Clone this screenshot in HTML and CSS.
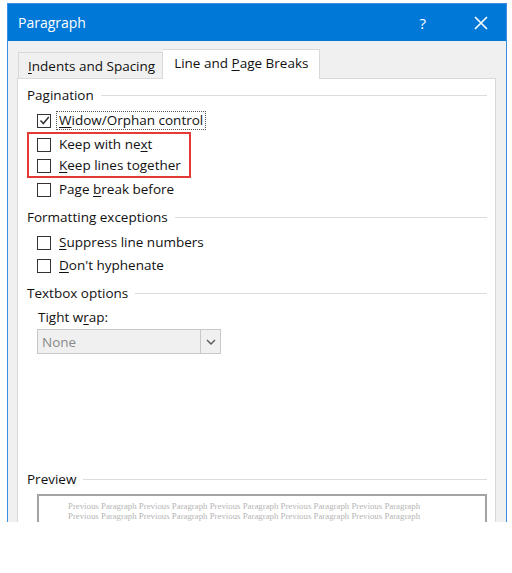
FILE: index.html
```html
<!DOCTYPE html>
<html lang="en">
<head>
  <meta charset="UTF-8">
  <title>Paragraph</title>
  <link rel="stylesheet" href="styles.css">
</head>
<body>
  <div class="dialog">
    <div class="titlebar">
      <span class="title">Paragraph</span>
      <span class="help">?</span>
      <svg class="close" width="14" height="14" viewBox="0 0 14 14">
        <path d="M1 1 L13 13 M13 1 L1 13" stroke="#fff" stroke-width="1.6" fill="none"/>
      </svg>
    </div>

    <div class="frame">
      <div class="tabs">
        <div class="tab"><span><u>I</u>ndents and Spacing</span></div>
        <div class="tab active"><span>Line and <u>P</u>age Breaks</span></div>
      </div>

      <div class="panel">
        <div class="group-title"><span>Pagination</span></div>
        <div class="options">
          <div class="row"><span class="box checked"><svg width="11" height="11" viewBox="0 0 11 11"><path d="M1.5 5.5 L4.3 8.5 L9.8 2" stroke="#333" stroke-width="1.5" fill="none"/></svg></span><span class="label focus"><u>W</u>idow/Orphan control</span></div>
          <div class="highlight">
            <div class="row"><span class="box"></span><span class="label">Keep with ne<u>x</u>t</span></div>
            <div class="row"><span class="box"></span><span class="label"><u>K</u>eep lines together</span></div>
          </div>
          <div class="row"><span class="box"></span><span class="label">Page <u>b</u>reak before</span></div>
        </div>

        <div class="group-title"><span>Formatting exceptions</span></div>
        <div class="options">
          <div class="row"><span class="box"></span><span class="label"><u>S</u>uppress line numbers</span></div>
          <div class="row"><span class="box"></span><span class="label"><u>D</u>on't hyphenate</span></div>
        </div>

        <div class="group-title"><span>Textbox options</span></div>
        <div class="options">
          <div class="field-label">Tight w<u>r</u>ap:</div>
          <div class="select">
            <span class="value">None</span>
            <span class="arrow"><svg width="10" height="6" viewBox="0 0 10 6"><path d="M1 1 L5 5 L9 1" stroke="#555" stroke-width="1.3" fill="none"/></svg></span>
          </div>
        </div>

        <div class="spacer"></div>

        <div class="group-title"><span>Preview</span></div>
        <div class="preview">
          <p>Previous Paragraph Previous Paragraph Previous Paragraph Previous Paragraph Previous Paragraph</p>
          <p>Previous Paragraph Previous Paragraph Previous Paragraph Previous Paragraph Previous Paragraph</p>
        </div>
      </div>
    </div>
  </div>
</body>
</html>
```

FILE: styles.css
```css
* { box-sizing: border-box; }
body {
  margin: 0;
  background-color: #fff;
  font-family: 'Open Sans', 'Noto Sans', sans-serif;
  font-size: 13px;
  color: #111;
}
u { text-decoration-thickness: 1px; text-underline-offset: 2px; }

.dialog {
  margin: 3px 0 0 7px;
  width: 500px;
  height: 519px;
  border: 1px solid #3a8ee6;
  border-bottom: none;
  background-color: #f0f0f0;
  overflow: hidden;
}
.titlebar {
  height: 37px;
  background-color: #0078d7;
  color: #fff;
  display: flex;
  align-items: center;
  padding: 0 18px 0 10px;
}
.title { font-size: 14px; flex: 1; }
.help { font-size: 15px; margin-right: 48px; }

.frame {
  padding: 9px 10px 0 9px;
  height: calc(100% - 37px);
  display: flex;
  flex-direction: column;
}
.tabs {
  display: flex;
  height: 28px;
  align-items: flex-end;
  padding-left: 1px;
}
.tab {
  height: 27px;
  padding: 0 7px 0 9px;
  display: flex;
  align-items: center;
  border: 1px solid #d9d9d9;
  border-bottom: none;
  background-color: #f0f0f0;
  font-size: 13.5px;
  margin-bottom: -1px;
}
.tab.active {
  height: 30px;
  background-color: #fff;
  padding: 0 11px 3px 11px;
  border-left: none;
  position: relative;
  z-index: 1;
}
.panel {
  flex: 1;
  background-color: #fff;
  border: 1px solid #d9d9d9;
  border-bottom: none;
  padding: 5px 8px 0 9px;
  display: flex;
  flex-direction: column;
}
.group-title {
  display: flex;
  align-items: center;
  height: 22px;
  font-size: 13.5px;
}
.group-title::after {
  content: "";
  flex: 1;
  height: 1px;
  background-color: #dcdcdc;
  margin-left: 7px;
}
.options {
  padding: 3px 0 5px 10px;
}
.row {
  display: flex;
  align-items: center;
  height: 23px;
  font-size: 13.5px;
}
.box {
  width: 14px;
  height: 14px;
  border: 1px solid #333;
  background-color: #fff;
  margin-right: 6px;
  display: flex;
  align-items: center;
  justify-content: center;
}
.label { padding: 0 2px; line-height: 17px; }
.label.focus { outline: 1px dotted #555; outline-offset: 0; }
.highlight {
  margin-left: -10px;
  padding-left: 8px;
  width: 164px;
  border: 2px solid #e53935;
}
.highlight .row { height: 21px; }
.field-label {
  font-size: 13.5px;
  height: 22px;
  line-height: 20px;
  margin-left: 1px;
}
.select {
  width: 184px;
  height: 25px;
  border: 1px solid #c8c8c8;
  background-color: #f0f0f0;
  display: flex;
  align-items: center;
}
.select .value {
  flex: 1;
  padding-left: 4px;
  color: #8a8a8a;
  font-size: 13.5px;
}
.select .arrow {
  width: 20px;
  height: 100%;
  border-left: 1px solid #c8c8c8;
  display: flex;
  align-items: center;
  justify-content: center;
}
.spacer { height: 109px; }
.preview {
  margin: 4px 0 0 10px;
  flex: 1;
  border: 2px solid #a3a3a3;
  border-bottom: none;
  padding: 5px 0 0 29px;
  font-family: 'Liberation Serif', serif;
  font-size: 8.8px;
  color: #b5b5b5;
  overflow: hidden;
}
.preview p {
  margin: 0;
  white-space: nowrap;
  line-height: 10px;
}
```
